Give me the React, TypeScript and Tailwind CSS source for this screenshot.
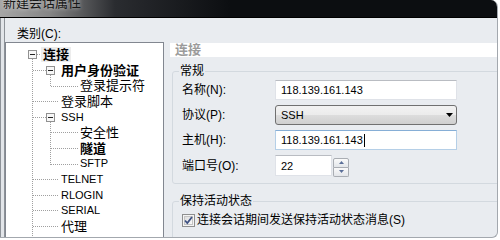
import React from "react";

type TreeNode = {
  label: string;
  level: 0 | 1 | 2;
  bold?: boolean;
  box?: boolean;
  latin?: boolean;
  selected?: boolean;
};

const nodes: TreeNode[] = [
  { label: "连接", level: 0, bold: true, box: true, selected: true },
  { label: "用户身份验证", level: 1, bold: true, box: true },
  { label: "登录提示符", level: 2 },
  { label: "登录脚本", level: 1 },
  { label: "SSH", level: 1, box: true, latin: true },
  { label: "安全性", level: 2 },
  { label: "隧道", level: 2, bold: true },
  { label: "SFTP", level: 2, latin: true },
  { label: "TELNET", level: 1, latin: true },
  { label: "RLOGIN", level: 1, latin: true },
  { label: "SERIAL", level: 1, latin: true },
  { label: "代理", level: 1 },
];

const indent = ["pl-[35px]", "pl-[55px]", "pl-[74px]"];

// row centre inside the tree box, in px
const rowY = (i: number) => Math.floor(11.8 + 15.6 * i);

function Dotted({ x1, y1, x2, y2 }: { x1: number; y1: number; x2: number; y2: number }) {
  return <line x1={x1} y1={y1} x2={x2} y2={y2} stroke="#a0a0a0" strokeDasharray="1 1" shapeRendering="crispEdges" />;
}

function Expander({ x, y }: { x: number; y: number }) {
  return (
    <g shapeRendering="crispEdges">
      <rect x={x + 0.5} y={y - 3.5} width={8} height={8} fill="#f7f7f7" stroke="#919191" />
      <line x1={x + 2} y1={y + 0.5} x2={x + 7} y2={y + 0.5} stroke="#222" />
    </g>
  );
}

function TreeLines() {
  const parts: React.ReactNode[] = [];
  parts.push(<Dotted key="v0" x1={26.5} y1={rowY(0) + 5} x2={26.5} y2={200} />);
  parts.push(<Dotted key="h0" x1={31} y1={rowY(0) + 0.5} x2={35} y2={rowY(0) + 0.5} />);
  nodes.forEach((n, i) => {
    const y = rowY(i) + 0.5;
    if (n.level === 1) {
      parts.push(<Dotted key={"h" + i} x1={27} y1={y} x2={n.box ? 40 : 53} y2={y} />);
      if (n.box) {
        let last = i;
        while (nodes[last + 1] && nodes[last + 1].level === 2) last++;
        parts.push(<Dotted key={"v" + i} x1={44.5} y1={rowY(i) + 5} x2={44.5} y2={rowY(last) + 1} />);
      }
    }
    if (n.level === 2) {
      parts.push(<Dotted key={"h" + i} x1={45} y1={y} x2={72} y2={y} />);
    }
  });
  nodes.forEach((n, i) => {
    if (n.box) parts.push(<Expander key={"b" + i} x={n.level === 0 ? 22 : 40} y={rowY(i)} />);
  });
  return (
    <svg className="absolute left-0 top-0" width="157" height="200">
      {parts}
    </svg>
  );
}

function TextBox({ value, focused, caret, className }: { value: string; focused?: boolean; caret?: boolean; className: string }) {
  return (
    <div
      className={`${className} flex items-center bg-white pl-[5px] text-[11px] text-black border ${
        focused ? "border-[#b5cfe7] border-t-[#86aed6]" : "border-[#dfe2e8] border-t-[#b9bcc2]"
      }`}
    >
      <span>{value}</span>
      {caret && <span className="ml-[1px] h-[13px] w-px bg-black" />}
    </div>
  );
}

export default function App() {
  return (
    <div className="h-[240px] w-[500px] bg-white font-['Liberation_Sans','Noto_Sans_CJK_SC',sans-serif] text-[12px] leading-[14px] text-black">
      <div className="flex h-[238px] w-[498px] flex-col overflow-hidden rounded-tr-[7px] rounded-br-[6px] border-r border-b border-[#a3a8ae] bg-[#e9ecf0]">
        {/* title bar */}
        <div className="h-[18px] shrink-0 overflow-hidden border-b border-black bg-[linear-gradient(to_right,#a6a6a6_0px,#858585_50px,#2a2c30_115px,#0c0e11_230px)]">
          <div className="-mt-[5px] pl-[3px] text-[13px] leading-[15px] text-[#161616] [text-shadow:0_0_4px_rgba(255,255,255,0.7)]">
            新建会话属性
          </div>
        </div>

        <div className="flex min-h-0 flex-1">
          {/* left frame */}
          <div className="w-[5px] shrink-0 border-l border-r border-[#8d9298] bg-[#e2e5e9]" />

          {/* category tree */}
          <div className="flex w-[159px] shrink-0 flex-col">
            <div className="pl-[12px] pt-[9px] pb-[1px]">类别(C):</div>
            <div className="flex-1 overflow-hidden border-t border-l border-r border-[#828790] bg-white">
              <div className="relative pt-[4px]">
                <TreeLines />
                {nodes.map((n, i) => (
                  <div key={i} className={`relative flex h-[15.6px] items-center ${indent[n.level]}`}>
                    <span
                      className={`${n.latin ? "text-[11px]" : "text-[13px]"} ${n.bold ? "font-bold" : ""} ${
                        n.selected ? "bg-[#ededed] px-[2px]" : ""
                      } leading-[15px]`}
                    >
                      {n.label}
                    </span>
                  </div>
                ))}
              </div>
            </div>
          </div>

          {/* settings panel */}
          <div className="flex min-w-0 flex-1 flex-col">
            <div className="ml-[6px] mt-[25px] flex h-[20px] items-center bg-white pl-[5px] text-[13px] font-bold text-[#9b9b9b]">
              连接
            </div>

            <fieldset className="ml-[8px] -mr-[4px] mt-[7px] rounded-[3px] border border-[#d3d9df] pl-[9px] pt-[2px] pb-[7px]">
              <legend className="-ml-[3px] px-[1px] leading-[14px]">常规</legend>
              <div className="mb-[5px] flex h-[20px] items-center">
                <div className="w-[93px]">名称(N):</div>
                <TextBox className="h-[20px] w-[182px]" value="118.139.161.143" />
              </div>
              <div className="mb-[5px] flex h-[20px] items-center">
                <div className="w-[93px]">协议(P):</div>
                <div className="flex h-[20px] w-[182px] items-center rounded-[3px] border border-[#707070] bg-[linear-gradient(to_bottom,#f2f2f2_0%,#ebebeb_50%,#dddddd_50%,#cfcfcf_100%)] pl-[5px] pr-[3px] text-[11px]">
                  <span>SSH</span>
                  <svg className="ml-auto" width="7" height="4" viewBox="0 0 7 4">
                    <polygon points="0,0 7,0 3.5,4" fill="#000" />
                  </svg>
                </div>
              </div>
              <div className="mb-[5px] flex h-[20px] items-center">
                <div className="w-[93px]">主机(H):</div>
                <TextBox className="h-[20px] w-[182px]" value="118.139.161.143" focused caret />
              </div>
              <div className="flex h-[21px] items-center">
                <div className="w-[93px]">端口号(O):</div>
                <TextBox className="h-[21px] w-[57px]" value="22" />
                <div className="ml-[1px] mt-[3px] flex w-[16px] flex-col">
                  <div className="flex h-[10px] items-center justify-center rounded-t-[2px] border border-[#a9adb3] bg-[linear-gradient(to_bottom,#fafafa,#e3e6ea)]">
                    <svg width="5" height="3" viewBox="0 0 5 3">
                      <polygon points="2.5,0 5,3 0,3" fill="#5b6f99" />
                    </svg>
                  </div>
                  <div className="flex h-[9px] items-center justify-center rounded-b-[2px] border border-t-0 border-[#a9adb3] bg-[linear-gradient(to_bottom,#fafafa,#e3e6ea)]">
                    <svg width="5" height="3" viewBox="0 0 5 3">
                      <polygon points="0,0 5,0 2.5,3" fill="#5b6f99" />
                    </svg>
                  </div>
                </div>
              </div>
            </fieldset>

            <fieldset className="ml-[8px] -mr-[4px] mt-[10px] rounded-[3px] border border-[#d3d9df] pl-[9px] pt-[5px] pb-[20px]">
              <legend className="-ml-[3px] px-[1px] leading-[14px]">保持活动状态</legend>
              <div className="flex items-center">
                <svg width="13" height="13" viewBox="0 0 13 13" className="shrink-0">
                  <defs>
                    <linearGradient id="cb" x1="0" y1="0" x2="1" y2="1">
                      <stop offset="0" stopColor="#dcdcdc" />
                      <stop offset="1" stopColor="#fbfbfb" />
                    </linearGradient>
                  </defs>
                  <rect x="0.5" y="0.5" width="12" height="12" fill="#f4f4f4" stroke="#8e8f8f" shapeRendering="crispEdges" />
                  <rect x="2.5" y="2.5" width="8" height="8" fill="url(#cb)" stroke="#c4c4c4" shapeRendering="crispEdges" />
                  <path d="M3 6.5 L5.3 9 L10 3" fill="none" stroke="#3f5283" strokeWidth="1.8" />
                </svg>
                <span className="ml-[2px]">连接会话期间发送保持活动状态消息(S)</span>
              </div>
            </fieldset>
          </div>
        </div>
      </div>
    </div>
  );
}
